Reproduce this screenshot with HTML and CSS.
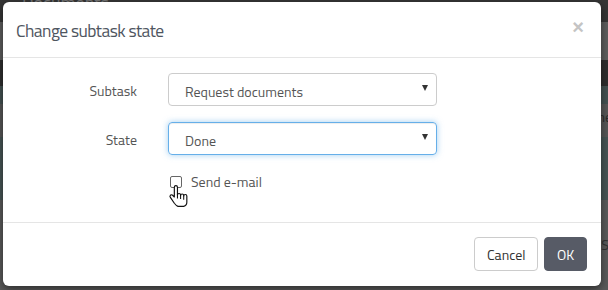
FILE: index.html
```html
<!DOCTYPE html>
<html>
<head>
<meta charset="utf-8">
<link rel="stylesheet" href="styles.css">
</head>
<body>
<div class="page">
  <div class="band b-top"><span class="bg-title">Documents</span></div>
  <div class="band b-gray1"></div>
  <div class="band b-dark"></div>
  <div class="band b-teal1"></div>
  <div class="band b-gray2"><span class="bg-text">ne</span></div>
  <div class="band b-teal2"></div>
  <div class="band b-gray3"><span class="bg-text si">Si</span></div>
</div>

<div class="modal">
  <div class="modal-header">
    <h4 class="modal-title">Change subtask state</h4>
    <span class="close">×</span>
  </div>
  <div class="modal-body">
    <div class="form-row">
      <label class="lbl">Subtask</label>
      <div class="select"><span>Request documents</span><span class="caret"></span></div>
    </div>
    <div class="form-row">
      <label class="lbl">State</label>
      <div class="select focus"><span>Done</span><span class="caret"></span></div>
    </div>
    <div class="form-row check-row">
      <span></span>
      <label class="check"><span class="box"></span><span>Send e-mail</span></label>
    </div>
  </div>
  <div class="modal-footer">
    <button class="btn btn-default">Cancel</button>
    <button class="btn btn-dark">OK</button>
  </div>
  <svg class="cursor" width="21" height="25" viewBox="0 0 20 24">
    <path d="M7.5 1.5c-.8 0-1.5.7-1.5 1.5v9.5l-1.6-1.7c-.6-.6-1.6-.6-2.2 0-.5.6-.5 1.5 0 2.1L6 18.5c1 1.3 2 2.5 3.5 3h5.5c1.8-.5 3-2.2 3-4v-6c0-.8-.7-1.4-1.5-1.4-.8 0-1.5.6-1.5 1.4v-.5c0-.8-.7-1.4-1.5-1.4-.8 0-1.5.6-1.5 1.4v-.5c0-.8-.7-1.4-1.5-1.4-.8 0-1.5.6-1.5 1.4V3c0-.8-.7-1.5-1.5-1.5z" fill="#fff" stroke="#111" stroke-width="1.1" stroke-linejoin="round"/>
    <path d="M12 10.5v4M15 11v4M9 10v4" stroke="#111" stroke-width="1" fill="none"/>
  </svg>
</div>
</body>
</html>
```
FILE: styles.css
```css
* { box-sizing: border-box; }
html, body { margin: 0; padding: 0; }
body {
  width: 608px;
  height: 290px;
  overflow: hidden;
  background: #5a5a5a;
  font-family: "Titillium Web", Lato, "Open Sans", sans-serif;
  position: relative;
}
.page { display: flex; flex-direction: column; }
.band { width: 100%; position: relative; }
.b-top { height: 22px; background: #363636; }
.b-gray1 { height: 38px; background: #5e5e5e; }
.b-dark { height: 26px; background: #2f2f2f; }
.b-teal1 { height: 18px; background: #445252; }
.b-gray2 { height: 33px; background: #575757; }
.b-teal2 { height: 63px; background: #485555; }
.b-gray3 { height: 90px; background: #5a5a5a; }
.bg-title { color: #777; font-size: 18px; margin-left: 22px; line-height: 6px; display: block; }
.bg-text { color: #2a2a2a; font-size: 14px; display: block; text-align: right; line-height: 26px; margin-right: -4px; }
.bg-text.si { line-height: 30px; margin-top: 30px; color: #333; }

.modal {
  position: absolute;
  left: 3px;
  top: 2px;
  width: 598px;
  height: 284px;
  background: #fff;
  border-radius: 6px;
  box-shadow: 0 3px 9px rgba(0,0,0,.5);
  display: flex;
  flex-direction: column;
}
.modal-header {
  height: 56px;
  border-bottom: 1px solid #e5e5e5;
  padding: 0 15px 0 13px;
  display: flex;
  align-items: center;
  justify-content: space-between;
}
.modal-title {
  margin: 0;
  font-weight: 400;
  font-size: 17.5px;
  color: #4e5560;
  letter-spacing: -0.55px;
  padding-top: 2px;
}
.close {
  color: #c4c4c4;
  font-size: 20px;
  font-weight: 700;
  font-family: "Liberation Sans", sans-serif;
  margin-right: 2px;
  margin-top: -4px;
}
.modal-body {
  height: 164px;
  padding: 15px 15px 0 15px;
  display: flex;
  flex-direction: column;
  gap: 16px;
}
.form-row {
  display: grid;
  grid-template-columns: 119px 269px;
  column-gap: 31px;
  align-items: center;
}
.lbl {
  text-align: right;
  font-size: 14px;
  color: #555;
  padding-top: 1px;
}
.select {
  height: 33px;
  border: 1px solid #ccc;
  border-radius: 4px;
  display: flex;
  align-items: center;
  justify-content: space-between;
  padding: 3px 8px 0 16px;
  font-size: 14px;
  color: #555;
}
.select.focus {
  border-color: #66afe9;
  box-shadow: inset 0 1px 1px rgba(0,0,0,.075), 0 0 6px rgba(102,175,233,.6);
}
.caret {
  width: 0; height: 0;
  border-left: 3px solid transparent;
  border-right: 3px solid transparent;
  border-top: 6px solid #333;
  margin-top: -6px;
}
.check-row { margin-top: 0; }
.check {
  display: flex;
  align-items: center;
  gap: 9px;
  font-size: 14px;
  color: #555;
  margin-left: 2px;
}
.box {
  width: 12px;
  height: 12px;
  border: 1px solid #666;
  border-radius: 2px;
  background: #fff;
  margin-top: 1px;
}
.modal-footer {
  flex: 1;
  border-top: 1px solid #e5e5e5;
  display: flex;
  justify-content: flex-end;
  align-items: flex-start;
  padding: 14px 14px 0 0;
  gap: 6px;
}
.btn {
  height: 34px;
  border-radius: 4px;
  font-family: inherit;
  font-size: 14px;
  padding: 0 12px;
  cursor: pointer;
}
.btn-default { background: #fff; border: 1px solid #ccc; color: #333; width: 64px; }
.btn-dark { background: #575b66; border: 1px solid #575b66; color: #fff; width: 43px; }
.cursor { position: absolute; left: 165px; top: 182px; }
```
